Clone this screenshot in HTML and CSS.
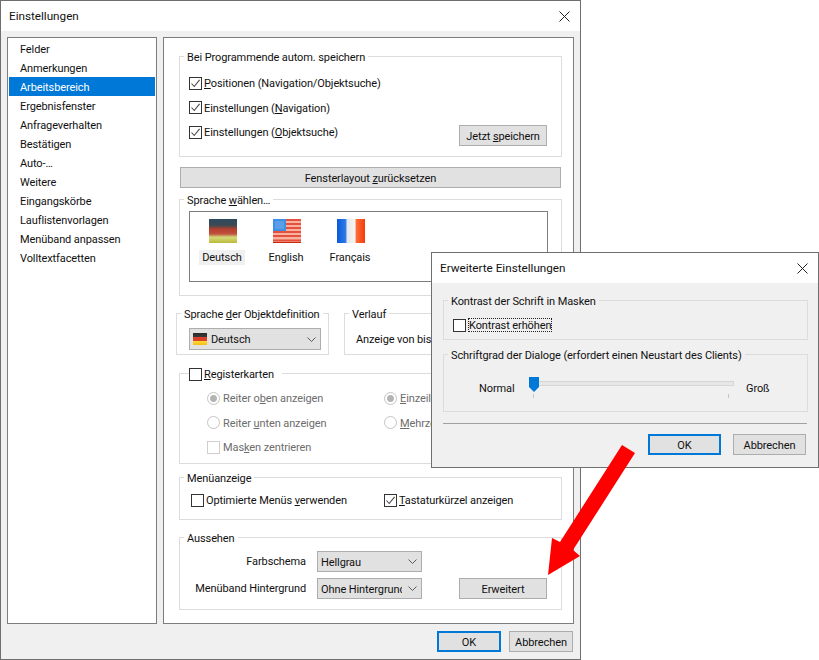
FILE: index.html
```html
<!DOCTYPE html>
<html lang="de">
<head>
<meta charset="utf-8">
<title>Einstellungen</title>
<link rel="stylesheet" href="styles.css">
</head>
<body>
<svg class="defs" width="0" height="0" aria-hidden="true">
  <defs>
    <linearGradient id="de" x1="0" y1="0" x2="0" y2="1">
      <stop offset="0" stop-color="#2c4a60"/><stop offset=".26" stop-color="#3c4a52"/>
      <stop offset=".42" stop-color="#b5402f"/><stop offset=".62" stop-color="#c0523e"/>
      <stop offset=".76" stop-color="#d2dc78"/><stop offset="1" stop-color="#bdb83c"/>
    </linearGradient>
    <linearGradient id="fr" x1="0" y1="0" x2="1" y2="0">
      <stop offset="0" stop-color="#0a5ad8"/><stop offset=".3" stop-color="#2a78e8"/>
      <stop offset=".37" stop-color="#e8e8ec"/><stop offset=".64" stop-color="#f4f4f4"/>
      <stop offset=".69" stop-color="#ff6a3a"/><stop offset="1" stop-color="#f23c08"/>
    </linearGradient>
    <linearGradient id="mini" x1="0" y1="0" x2="0" y2="1">
      <stop offset="0" stop-color="#2a2a2a"/><stop offset=".33" stop-color="#3a3a3a"/>
      <stop offset=".36" stop-color="#d8402a"/><stop offset=".64" stop-color="#d8402a"/>
      <stop offset=".67" stop-color="#ffd83a"/><stop offset="1" stop-color="#f2c010"/>
    </linearGradient>
    <symbol id="tick" viewBox="0 0 11 11"><path d="M1.5 5.5 4.2 8.5 9.6 1.8" fill="none" stroke="#4a4a4a" stroke-width="1.1"/></symbol>
    <symbol id="close" viewBox="0 0 11 11"><path d="M.5.5 10.5 10.5M10.5.5.5 10.5" fill="none" stroke="#222" stroke-width="1"/></symbol>
    <symbol id="chev" viewBox="0 0 9 5"><path d="M.5.5 4.5 4.5 8.5.5" fill="none" stroke="#5a5a5a" stroke-width="1"/></symbol>
  </defs>
</svg>

<section class="window main-window">
  <header class="titlebar"><span>Einstellungen</span><svg class="close"><use href="#close"/></svg></header>
  <div class="main-body">
    <div class="main-row">
      <ul class="nav">
        <li>Felder</li>
        <li>Anmerkungen</li>
        <li class="active">Arbeitsbereich</li>
        <li>Ergebnisfenster</li>
        <li>Anfrageverhalten</li>
        <li>Bestätigen</li>
        <li>Auto-…</li>
        <li>Weitere</li>
        <li>Eingangskörbe</li>
        <li>Lauflistenvorlagen</li>
        <li>Menüband anpassen</li>
        <li>Volltextfacetten</li>
      </ul>
      <div class="panel">
        <fieldset class="group g-save">
          <legend>Bei Programmende autom. speichern</legend>
          <div class="save-rows">
            <label class="check"><span class="box"><svg><use href="#tick"/></svg></span><span><u>P</u>ositionen (Navigation/Objektsuche)</span></label>
            <label class="check"><span class="box"><svg><use href="#tick"/></svg></span><span>Einstellungen (<u>N</u>avigation)</span></label>
            <label class="check"><span class="box"><svg><use href="#tick"/></svg></span><span>Einstellungen (<u>O</u>bjektsuche)</span></label>
          </div>
          <button class="btn btn-save">Jetzt <u>s</u>peichern</button>
        </fieldset>

        <button class="btn btn-reset">Fensterlayout <u>z</u>urücksetzen</button>

        <fieldset class="group g-lang">
          <legend>Sprache <u>w</u>ählen…</legend>
          <div class="lang-list">
            <div class="lang">
              <svg class="flag" viewBox="0 0 28 24"><rect width="28" height="24" fill="url(#de)"/></svg>
              <span class="lang-name selected">Deutsch</span>
            </div>
            <div class="lang">
              <svg class="flag" viewBox="0 0 28 24">
                <rect width="28" height="24" fill="#f8b0a0"/>
                <path d="M0 1h28M0 5h28M0 9h28M0 13h28M0 17h28M0 21.5h28" stroke="#e4523c" stroke-width="2"/>
                <rect y="23" width="28" height="1" fill="#c82a10"/>
                <rect width="13" height="12" fill="#3f8fe6"/>
                <rect x="2" y="2" width="9" height="8" fill="#5a9ee8"/>
              </svg>
              <span class="lang-name">English</span>
            </div>
            <div class="lang">
              <svg class="flag" viewBox="0 0 28 24"><rect width="28" height="24" fill="url(#fr)"/></svg>
              <span class="lang-name">Français</span>
            </div>
          </div>
        </fieldset>

        <div class="split">
          <fieldset class="group g-def">
            <legend>Sprache <u>d</u>er Objektdefinition</legend>
            <div class="select select-lang">
              <svg class="mini-flag" viewBox="0 0 14 12"><rect width="14" height="12" fill="url(#mini)"/></svg>
              <span class="select-text">Deutsch</span>
              <svg class="chev"><use href="#chev"/></svg>
            </div>
          </fieldset>
          <fieldset class="group g-hist">
            <legend>Verlauf</legend>
            <div class="hist-text">Anzeige von bis</div>
          </fieldset>
        </div>

        <fieldset class="group g-tabs">
          <legend class="legend-check"><label class="check"><span class="box"></span><span><u>R</u>egisterkarten</span></label></legend>
          <div class="tabs-grid">
            <label class="radio on"><span class="dot"></span><span>Reiter o<u>b</u>en anzeigen</span></label>
            <label class="radio on"><span class="dot"></span><span><u>E</u>inzeilig</span></label>
            <label class="radio"><span class="dot"></span><span>Reiter <u>u</u>nten anzeigen</span></label>
            <label class="radio"><span class="dot"></span><span><u>M</u>ehrzeilig</span></label>
            <label class="check disabled"><span class="box"></span><span>Mas<u>k</u>en zentrieren</span></label>
          </div>
        </fieldset>

        <fieldset class="group g-menu">
          <legend>Menüanzeige</legend>
          <div class="menu-row">
            <label class="check"><span class="box"></span><span>Optimierte Menüs <u>v</u>erwenden</span></label>
            <label class="check"><span class="box"><svg><use href="#tick"/></svg></span><span><u>T</u>astaturkürzel anzeigen</span></label>
          </div>
        </fieldset>

        <fieldset class="group g-look">
          <legend>Aussehen</legend>
          <div class="look-row">
            <div class="look-form">
              <span class="look-label">Farbschema</span>
              <div class="select select-small"><span class="select-text">Hellgrau</span><svg class="chev"><use href="#chev"/></svg></div>
              <span class="look-label">Menüband Hintergrund</span>
              <div class="select select-small"><span class="select-text">Ohne Hintergrund</span><svg class="chev"><use href="#chev"/></svg></div>
            </div>
            <button class="btn btn-more">Erweitert</button>
          </div>
        </fieldset>
      </div>
    </div>
    <footer class="actions main-actions">
      <button class="btn primary">OK</button>
      <button class="btn">Abbrechen</button>
    </footer>
  </div>
</section>

<section class="window dialog">
  <header class="titlebar"><span>Erweiterte Einstellungen</span><svg class="close"><use href="#close"/></svg></header>
  <div class="dialog-body">
    <fieldset class="group g-contrast">
      <legend>Kontrast der Schrift in Masken</legend>
      <label class="check"><span class="box"></span><span class="focus">Kontrast erhöhen</span></label>
    </fieldset>
    <fieldset class="group g-size">
      <legend>Schriftgrad der Dialoge (erfordert einen Neustart des Clients)</legend>
      <div class="slider-row">
        <span class="slider-end slider-start">Normal</span>
        <div class="slider">
          <div class="track"></div>
          <svg class="thumb" viewBox="0 0 10 15"><path d="M0 0H10V10L5 15 0 10Z" fill="#0078d7"/></svg>
          <div class="ticks"><i></i><i></i></div>
        </div>
        <span class="slider-end">Groß</span>
      </div>
    </fieldset>
    <hr class="rule">
    <footer class="actions dialog-actions">
      <button class="btn primary">OK</button>
      <button class="btn">Abbrechen</button>
    </footer>
  </div>
</section>

<svg class="arrow" viewBox="0 0 819 660" aria-hidden="true">
  <path d="M622 445 635 453 573 550 580 556 548 575 552 538 560 542Z" fill="#ff0000"/>
</svg>
</body>
</html>
```
FILE: styles.css
```css
* { box-sizing: border-box; }
html, body { margin: 0; height: 100%; background: #fff; }
body {
  position: relative;
  width: 819px;
  height: 660px;
  overflow: hidden;
  font: 11px/16px Roboto, "Liberation Sans", sans-serif;
  letter-spacing: -0.1px;
  color: #111;
}
.defs { position: absolute; }
u { text-underline-offset: 1px; }

.window {
  position: absolute;
  display: flex;
  flex-direction: column;
  background: #f0f0f0;
  border: 1px solid #6f6f6f;
}
.main-window { left: 0; top: 0; width: 581px; height: 660px; }
.dialog { left: 431px; top: 252px; width: 388px; height: 216px; }

.titlebar {
  height: 30px;
  flex: none;
  display: flex;
  align-items: center;
  justify-content: space-between;
  padding: 0 10px 0 8px;
  background: #fff;
  font-size: 11.7px;
  letter-spacing: 0;
}
.close { width: 11px; height: 11px; }

.main-body { flex: 1; display: flex; flex-direction: column; padding: 6px 6px 0; }
.main-row { display: flex; gap: 6px; height: 587px; }

.nav {
  width: 150px;
  margin: 0;
  padding: 1px;
  list-style: none;
  background: #fff;
  border: 1px solid #7d7d7d;
}
.nav li { height: 19px; line-height: 21px; padding-left: 11px; }
.nav .active { background: #0078d7; color: #fff; }

.panel {
  width: 411px;
  padding: 11px 11px 0 15px;
  background: #fff;
  border: 1px solid #7d7d7d;
}

.group {
  margin: 0;
  padding: 0;
  min-width: 0;
  border: 1px solid #dcdcdc;
}
.group legend { height: 15px; padding: 0 3px; margin-left: 4px; line-height: 18px; white-space: nowrap; }

.check, .radio { display: flex; align-items: flex-start; gap: 2px; height: 16px; line-height: 18px; white-space: nowrap; }
.box {
  width: 13px;
  height: 13px;
  flex: none;
  align-self: center;
  background: #fff;
  border: 1px solid #333;
}
.box svg { display: block; width: 11px; height: 11px; }
.dot {
  width: 13px;
  height: 13px;
  flex: none;
  align-self: center;
  margin-right: 1px;
  border: 1px solid #c4c4c4;
  border-radius: 50%;
  background: #fff;
}
.radio.on .dot { background: radial-gradient(circle, #b4b4b4 0 3px, #fff 4px); }
.radio, .disabled { color: #6d6d6d; }
.disabled .box { border-color: #cfcfcf; }
.disabled { gap: 3px; }

.btn {
  height: 21px;
  padding: 2px 0 0;
  font: inherit;
  letter-spacing: inherit;
  color: inherit;
  background: #e1e1e1;
  border: 1px solid #adadad;
}
.primary { border: 2px solid #0078d7; }

.g-save {
  position: relative;
  height: 108px;
  display: block;
}
.save-rows { display: flex; flex-direction: column; gap: 8.5px; padding: 11px 0 0 9px; }
.btn-save { position: absolute; right: 14px; bottom: 10px; width: 88px; }

.btn-reset { display: block; width: 381px; margin: 10px 0 4px 1px; }

.g-lang { height: 104px; }
.lang-list {
  display: flex;
  height: 71px;
  margin: 4px 13px 0 9px;
  padding: 7px 0 0;
  border: 1px solid #7d7d7d;
}
.lang { width: 64px; display: flex; flex-direction: column; align-items: center; }
.flag { display: block; width: 28px; height: 24px; margin-left: 2px; }
.lang-name { height: 15px; margin-top: 7px; padding: 0 3px; line-height: 16px; }
.selected { background: #f0f0f0; }

.split { display: flex; gap: 15px; margin: 10px 0 0 -3px; }
.g-def { width: 153px; height: 49px; }
.g-def .select { margin: 7px 7px 0 12px; }
.g-hist { width: 218px; height: 49px; }
.hist-text { padding: 11px 0 0 11px; }

.select {
  display: flex;
  align-items: center;
  height: 21px;
  padding: 0 4px 0 3px;
  background: #e1e1e1;
  border: 1px solid #adadad;
}
.select-text { flex: 1; min-width: 0; padding-top: 2px; overflow: hidden; white-space: nowrap; }
.chev { width: 9px; height: 5px; flex: none; margin-left: 6px; }
.mini-flag { width: 14px; height: 12px; flex: none; margin-right: 4px; }
.select-lang { height: 22px; }

.g-tabs { height: 98px; margin-top: 11px; }
.legend-check.legend-check { padding: 0 8px 0 0; margin-left: 9px; }
.tabs-grid {
  display: grid;
  grid-template-columns: 177px auto;
  grid-auto-rows: 24.5px;
  padding: 5px 0 0 27px;
  align-items: center;
}

.g-menu { height: 50px; margin-top: 6px; }
.menu-row { display: grid; grid-template-columns: 193px auto; padding: 7px 0 0 11px; }

.g-look { height: 80px; margin-top: 10px; }
.look-row { display: flex; align-items: flex-end; padding: 6px 14px 0 0; }
.look-form {
  display: grid;
  grid-template-columns: 126px 105px;
  grid-auto-rows: 21px;
  column-gap: 11px;
  row-gap: 6px;
  width: 279px;
  align-items: center;
}
.look-label { text-align: right; }
.btn-more { width: 88px; margin-left: auto; }

.actions { display: flex; justify-content: flex-end; gap: 8px; }
.main-actions { margin-top: 7px; padding-right: 1px; }
.main-actions .btn { width: 64px; }

.dialog-body { flex: 1; padding: 10px 10px 0 11px; }
.g-contrast { height: 47px; }
.g-contrast .check { height: 25px; padding: 9px 0 0 9px; }
.focus { height: 14px; margin-top: 1px; padding: 0 1px; line-height: 16px; outline: 1px dotted #222; outline-offset: -1px; }
.g-size { height: 65px; margin-top: 7px; }
.slider-row { display: flex; padding: 19px 0 0 35px; }
.slider-start { width: 50px; }
.slider { position: relative; width: 205px; height: 30px; margin-right: 12px; }
.track { height: 5px; background: #e7e7e7; border: 1px solid #d6d6d6; }
.thumb { position: absolute; left: 0; top: -4px; width: 10px; height: 15px; }
.ticks { display: flex; justify-content: space-between; padding: 8px 5px 0 4px; }
.ticks i { width: 1px; height: 4px; background: #c4c4c4; }
.rule { height: 1px; margin: 11px 1px 10px 0; border: 0; background: #a0a0a0; }
.dialog-actions { gap: 12px; padding-right: 2px; }
.dialog-actions .btn { width: 73px; }

.arrow { position: absolute; left: 0; top: 0; width: 819px; height: 660px; pointer-events: none; }
```
